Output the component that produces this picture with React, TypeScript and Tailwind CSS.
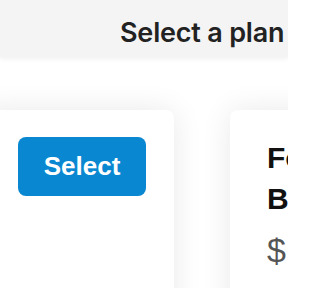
import React from "react";

export default function App() {
  return (
    <div className="w-[288px] h-[288px] overflow-hidden bg-white relative">
      <div className="relative z-10 h-[57px] bg-[#f4f4f4] shadow-[0_2px_5px_rgba(0,0,0,0.06)] flex items-center pt-[9px] pl-[120px]">
        <h1 className="whitespace-nowrap text-[27px] font-semibold text-[#222222] font-['Inter',sans-serif] tracking-[-0.2px]">
          Select a plan
        </h1>
      </div>
      <div className="flex gap-[56px] -ml-[19px] pt-[53px] w-[600px]">
        <div className="w-[193px] h-[300px] shrink-0 bg-white rounded-lg shadow-[0_0_30px_rgba(0,0,0,0.09)] pt-[27px] pl-[37px]">
          <button className="w-[128px] h-[59px] rounded-[8px] bg-[#0a87d1] text-white text-[26px] font-bold font-['Liberation_Sans',Arial,sans-serif]">
            Select
          </button>
        </div>
        <div className="w-[193px] h-[300px] shrink-0 bg-white rounded-lg shadow-[0_0_30px_rgba(0,0,0,0.09)] pt-[27px] pl-[37px] font-['Liberation_Sans',Arial,sans-serif]">
          <h2 className="text-[30px] leading-[41px] font-bold text-[#111111] whitespace-nowrap">
            Forever
            <br />
            Business
          </h2>
          <div className="mt-[6px] text-[34px] leading-[50px] text-[#555555] tracking-[3px] whitespace-nowrap">$29</div>
        </div>
      </div>
    </div>
  );
}
